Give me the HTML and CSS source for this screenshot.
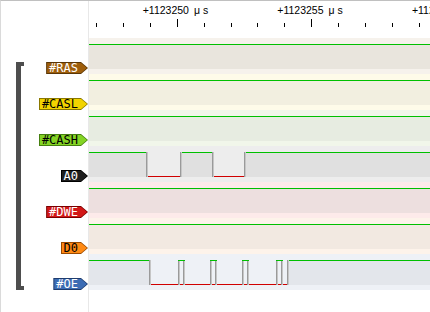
FILE: index.html
```html
<!DOCTYPE html>
<html lang="en">
<head>
    <meta charset="UTF-8">
    <meta name="viewport" content="width=device-width, initial-scale=1.0">
    <title>Waveform Viewer</title>
    <link rel="stylesheet" href="styles.css">
</head>
<body>
    <div class="viewer">
        <!-- Signal names -->
        <div class="names">
            <div class="bracket"></div>
            <div class="name-list">
                <div class="name-row"><span class="tag ras"><span>#RAS</span></span></div>
                <div class="name-row"><span class="tag casl"><span>#CASL</span></span></div>
                <div class="name-row"><span class="tag cash"><span>#CASH</span></span></div>
                <div class="name-row"><span class="tag a0"><span>A0</span></span></div>
                <div class="name-row"><span class="tag dwe"><span>#DWE</span></span></div>
                <div class="name-row"><span class="tag d0"><span>D0</span></span></div>
                <div class="name-row"><span class="tag oe"><span>#OE</span></span></div>
            </div>
        </div>

        <!-- Waveforms -->
        <div class="waves">
            <div class="ruler">
                <div class="ruler-labels">
                    <span class="time">+1123250<span class="unit">μs</span></span>
                    <span class="time">+1123255<span class="unit">μs</span></span>
                    <span class="time">+1123260<span class="unit">μs</span></span>
                </div>
                <div class="ticks">
                    <i></i><i></i><i></i><i class="major"></i><i></i><i></i><i></i>
                    <i></i><i class="major"></i><i></i><i></i><i></i><i></i>
                </div>
            </div>

            <div class="track ras"><div class="band"><i class="hi fill"></i></div></div>
            <div class="track casl"><div class="band"><i class="hi fill"></i></div></div>
            <div class="track cash"><div class="band"><i class="hi fill"></i></div></div>
            <div class="track a0">
                <div class="band">
                    <i class="hi" style="width: 57px"></i><i class="edge"></i>
                    <i class="lo" style="width: 32px"></i><i class="edge"></i>
                    <i class="hi" style="width: 30px"></i><i class="edge"></i>
                    <i class="lo" style="width: 30px"></i><i class="edge"></i>
                    <i class="hi fill"></i>
                </div>
            </div>
            <div class="track dwe"><div class="band"><i class="hi fill"></i></div></div>
            <div class="track d0"><div class="band"><i class="hi fill"></i></div></div>
            <div class="track oe">
                <div class="band">
                    <i class="hi" style="width: 60px"></i><i class="edge"></i>
                    <i class="lo" style="width: 27px"></i><i class="pulse"></i>
                    <i class="lo" style="width: 25px"></i><i class="pulse"></i>
                    <i class="lo" style="width: 25px"></i><i class="pulse"></i>
                    <i class="lo" style="width: 27px"></i><i class="pulse"></i>
                    <i class="lo" style="width: 4px"></i><i class="edge"></i>
                    <i class="hi fill"></i>
                </div>
            </div>
        </div>
    </div>
</body>
</html>
```

FILE: styles.css
```css
body {
    margin: 0;
    background: white;
    overflow: hidden;
}
.viewer {
    display: flex;
    width: 430px;
    height: 312px;
    box-sizing: border-box;
    border-top: 1px solid #c0c0c0;
    border-left: 1px solid #dadada;
    overflow: hidden;
}

/* names column */
.names {
    display: flex;
    width: 87px;
    flex: 0 0 87px;
    border-right: 1px solid #e8e8e8;
}
.bracket {
    width: 8px;
    height: 228px;
    margin: 61px 0 0 15px;
    box-sizing: border-box;
    border: 4px solid #4e4e4e;
    border-left-width: 5px;
    border-right: none;
}
.name-list {
    flex: 1;
    padding-top: 37px;
}
.name-row {
    height: 36px;
    display: flex;
    justify-content: flex-end;
    align-items: flex-end;
}
.tag {
    display: inline-flex;
    height: 12px;
    padding: 1px;
    box-sizing: border-box;
    background: var(--edge);
    clip-path: polygon(0 0, calc(100% - 7px) 0, 100% 50%, calc(100% - 7px) 100%, 0 100%);
}
.tag span {
    display: block;
    height: 10px;
    line-height: 10px;
    padding: 0 9px 0 2px;
    background: var(--fill);
    color: var(--text);
    font-family: "DejaVu Sans Mono", monospace;
    font-size: 12px;
    clip-path: polygon(0 0, calc(100% - 6px) 0, 100% 50%, calc(100% - 6px) 100%, 0 100%);
}
.tag.ras  { --edge: #5a3606; --fill: #9e5e0c; --text: #fff; }
.tag.casl { --edge: #8a7800; --fill: #f2d400; --text: #000; }
.tag.cash { --edge: #468010; --fill: #84d424; --text: #000; }
.tag.a0   { --edge: #000;    --fill: #1e1e1e; --text: #fff; }
.tag.dwe  { --edge: #7a0000; --fill: #d21818; --text: #fff; }
.tag.d0   { --edge: #9a4a00; --fill: #ff8a14; --text: #000; }
.tag.oe   { --edge: #1e3c6e; --fill: #3c6cb4; --text: #fff; }

/* ruler */
.waves {
    flex: 1;
    overflow: hidden;
}
.ruler {
    height: 37px;
    box-sizing: border-box;
    padding-top: 2px;
    overflow: hidden;
}
.ruler-labels {
    display: flex;
    height: 14px;
    padding-left: 20.7px;
}
.time {
    flex: 0 0 134.6px;
    text-align: center;
    white-space: nowrap;
    font-family: "Liberation Sans", Arial, sans-serif;
    font-size: 10.5px;
    line-height: 14px;
    color: #000;
}
.unit {
    margin-left: 5px;
    letter-spacing: 3px;
}
.ticks {
    display: flex;
    align-items: flex-end;
    height: 8px;
    margin-top: 2px;
    padding-left: 7px;
}
.ticks i {
    flex: 0 0 26.92px;
    height: 4px;
    box-sizing: border-box;
    border-left: 1px solid #000;
}
.ticks i.major {
    height: 8px;
}

/* tracks */
.track {
    height: 36px;
    box-sizing: border-box;
    padding: 6px 0 5px;
    background: var(--light);
}
.track.ras  { --light: #f6f2ec; --dark: #e9e5dd; }
.track.casl { --light: #fefbe9; --dark: #f2efe0; }
.track.cash { --light: #f1f6ea; --dark: #e7ece1; }
.track.a0   { --light: #ededed; --dark: #e0e0e0; }
.track.dwe  { --light: #fdeaea; --dark: #eddfdf; }
.track.d0   { --light: #fdf3ea; --dark: #f2e9e1; }
.track.oe   { --light: #eef1f6; --dark: #e3e6eb; }
.band {
    display: flex;
    height: 25px;
    background: linear-gradient(#d00000, #d00000) bottom / 100% 1px no-repeat;
}
.band i {
    flex: 0 0 auto;
    height: 25px;
    box-sizing: border-box;
}
.band .fill {
    flex: 1;
}
.hi {
    background: var(--dark);
    border-top: 1px solid #00c000;
}
.edge {
    width: 2px;
    background: linear-gradient(to right, #9a9a9a 50%, #c6c6c6 50%);
}
.pulse {
    width: 7px;
    background:
        linear-gradient(#00c000, #00c000) top / 100% 1px no-repeat,
        linear-gradient(to right, #9a9a9a 0 1px, #c6c6c6 1px 2px, transparent 2px 5px, #9a9a9a 5px 6px, #c6c6c6 6px);
}
```
